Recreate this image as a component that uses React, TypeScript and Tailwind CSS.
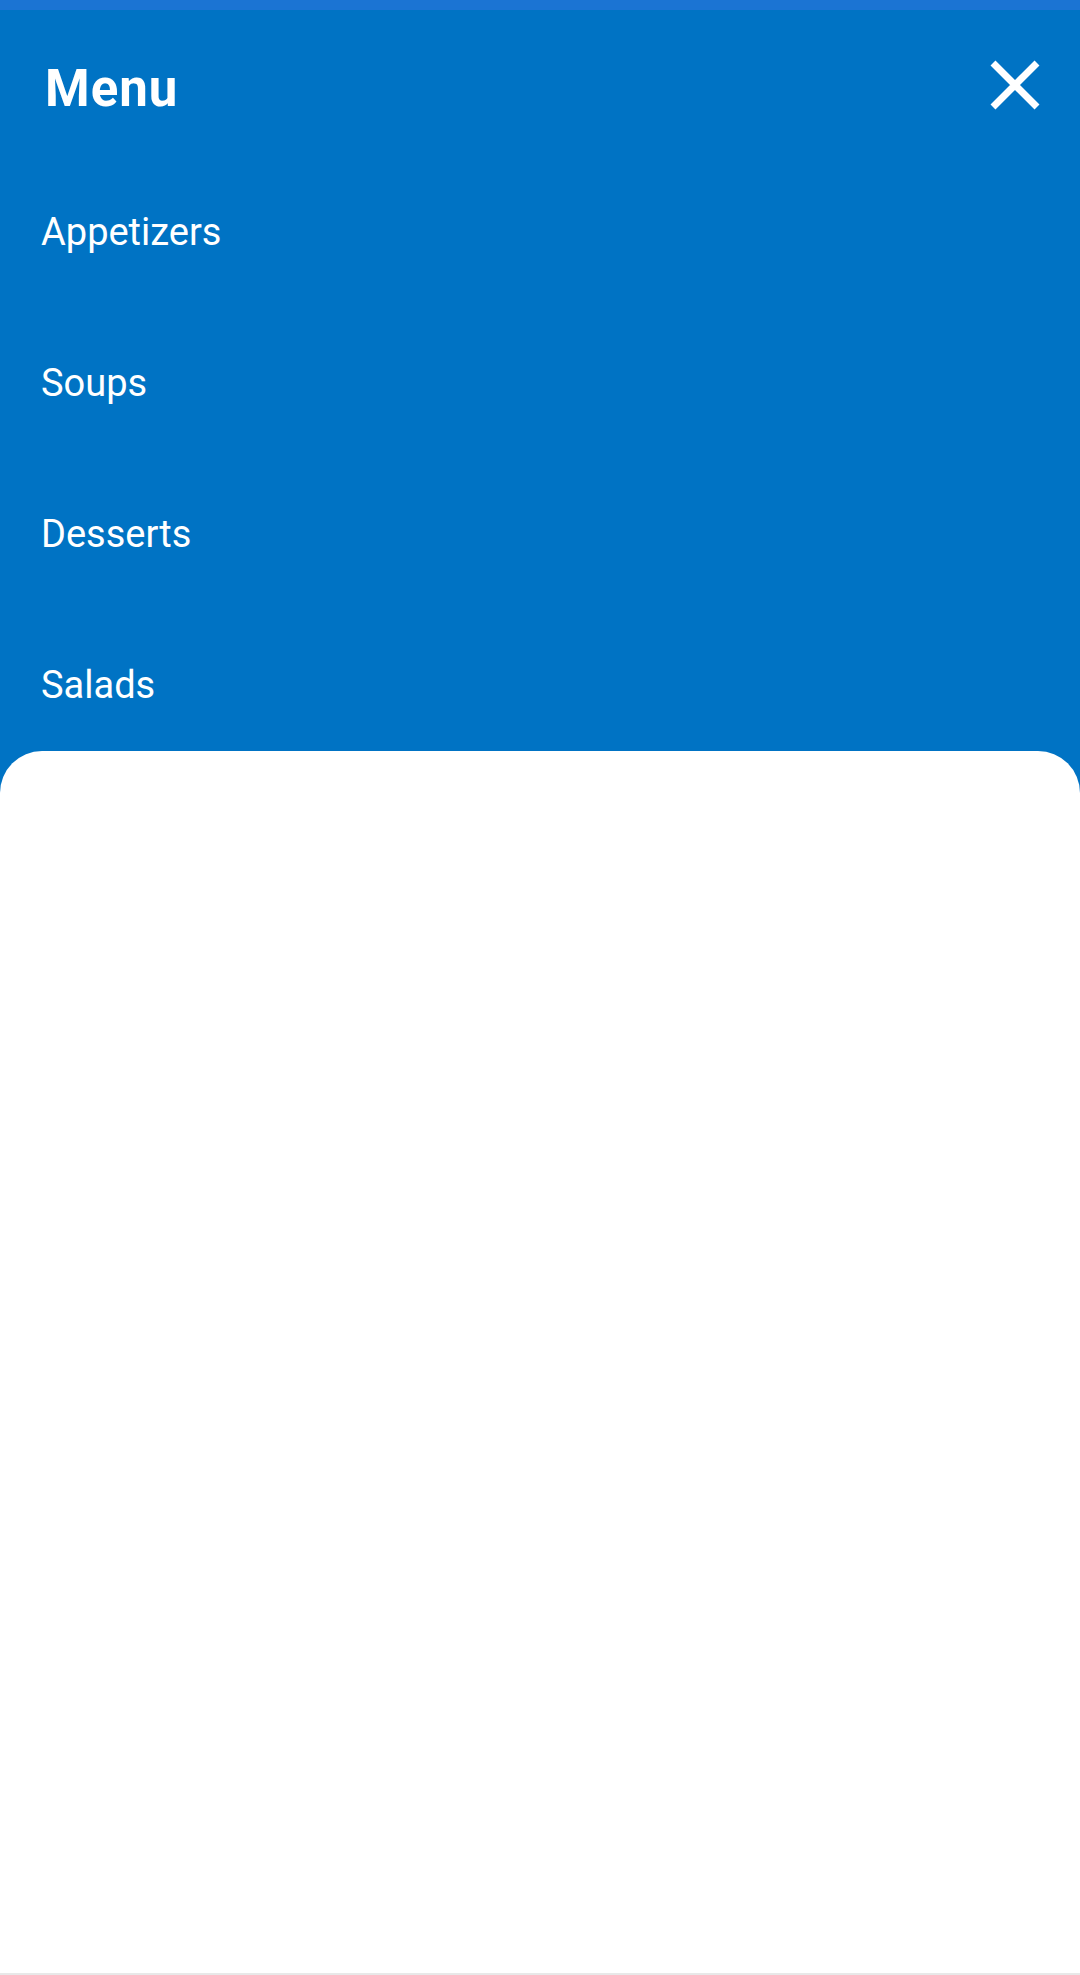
const categories = ['Appetizers', 'Soups', 'Desserts', 'Salads'];

const CloseIcon = () => (
  <svg viewBox="0 0 72 72" width={72} height={72} fill="none" stroke="#ffffff" strokeWidth={7}>
    <path d="M14 14L58 58M58 14L14 58" />
  </svg>
);

export default function App() {
  return (
    <div
      className="flex h-[1975px] w-full flex-col bg-[#0073c4] text-white"
      style={{ fontFamily: 'Roboto, "Noto Sans", sans-serif' }}
    >
      <div className="h-[10px] bg-[#1b74d3]" />

      <div className="flex h-[147px] items-start justify-between pl-[45px] pr-[29px]">
        <h1 className="mt-[53px] text-[51px] font-bold leading-none tracking-[1px]">Menu</h1>
        <button className="mt-[39px]" aria-label="Close menu">
          <CloseIcon />
        </button>
      </div>

      <nav className="flex flex-col gap-[113px] pl-[41px] pt-[56px] pb-[47px]">
        {categories.map((c) => (
          <a key={c} className="text-[38px] leading-none">
            {c}
          </a>
        ))}
      </nav>

      <div className="flex-1 rounded-t-[42px] border-b-2 border-[#e8e8e8] bg-white" />
    </div>
  );
}
